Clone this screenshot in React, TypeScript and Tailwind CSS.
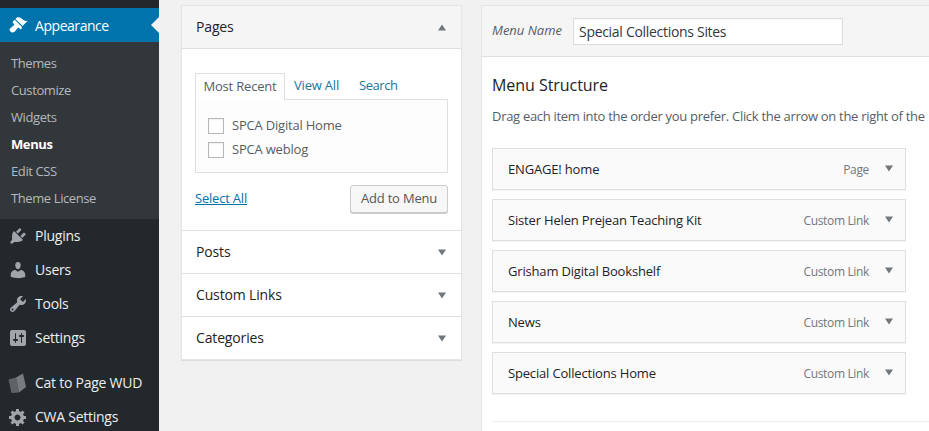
import React from "react";

const P = {
  appearance:
    "M14.48 11.06L7.41 3.99l1.5-1.5c.5-.56 2.3-.47 3.51.32 1.21.8 1.43 1.28 2.91 2.1 1.18.64 2.45 1.26 4.45.85zm-.71.71L6.7 4.7 4.93 6.47c-.39.39-.39 1.02 0 1.41l1.06 1.06c.39.39.39 1.03 0 1.42-.6.6-1.43 1.11-2.21 1.69-.35.26-.7.53-1.01.84C1.43 13.23 1 15.24 2.38 16.62c1.38 1.38 3.39.95 4.73-.39.31-.31.58-.66.84-1.01.58-.78 1.09-1.61 1.69-2.21.39-.39 1.03-.39 1.42 0l1.06 1.06c.39.39 1.02.39 1.41 0z",
  plugins:
    "M13.11 4.36L9.87 7.6 8 5.73l3.24-3.24c.35-.34 1.05-.2 1.56.32.52.51.66 1.21.31 1.55zm-8 1.77l.91-1.12 9.01 9.01-1.19.84c-.71.71-2.63 1.16-3.82 1.16H6.14L4.9 17.26c-.59.59-1.54.59-2.12 0-.59-.58-.59-1.53 0-2.12l1.24-1.24v-3.88c0-1.13.4-3.19 1.09-3.89zm7.26 3.97l3.24-3.24c.34-.35 1.04-.21 1.55.31.52.51.66 1.21.31 1.55l-3.24 3.25z",
  users:
    "M10 9.25c-2.27 0-2.73-3.44-2.73-3.44C7 4.02 7.82 2 9.97 2c2.16 0 2.98 2.02 2.71 3.81 0 0-.41 3.44-2.68 3.44zm0 2.57L12.72 10c2.39 0 4.52 2.33 4.52 4.53v2.49s-3.65 1.13-7.24 1.13c-3.65 0-7.24-1.13-7.24-1.13v-2.49c0-2.25 1.94-4.48 4.47-4.48z",
  tools:
    "M16.68 9.77c-1.34 1.34-3.3 1.67-4.95.99l-5.41 6.52c-.99.99-2.59.99-3.58 0s-.99-2.59 0-3.57l6.52-5.42c-.68-1.65-.35-3.61.99-4.95 1.28-1.28 3.12-1.62 4.72-1.06l-2.89 2.89 2.82 2.82 2.86-2.87c.53 1.58.18 3.39-1.08 4.65zM3.81 16.21c.4.39 1.04.39 1.43 0 .4-.4.4-1.04 0-1.43-.39-.4-1.03-.4-1.43 0-.39.39-.39 1.03 0 1.43z",
  settings:
    "M18 16V4c0-1.1-.9-2-2-2H4c-1.1 0-2 .9-2 2v12c0 1.1.9 2 2 2h12c1.1 0 2-.9 2-2zM8 11h1c.55 0 1 .45 1 1s-.45 1-1 1H8v1.5c0 .28-.22.5-.5.5s-.5-.22-.5-.5V13H6c-.55 0-1-.45-1-1s.45-1 1-1h1V5.500c0-.28.22-.5.5-.5s.5.22.5.5V11zm5-2h-1c-.55 0-1-.45-1-1s.45-1 1-1h1V5.500c0-.28.22-.5.5-.5s.5.22.5.5V7h1c.55 0 1 .45 1 1s-.45 1-1 1h-1v5.500c0 .28-.22.5-.5.5s-.5-.22-.5-.5V9z",
  gear:
    "M18 12h-2.180c-.17.7-.44 1.350-.81 1.930l1.540 1.540-2.100 2.100-1.540-1.540c-.58.36-1.230.63-1.910.79V19H8v-2.180c-.68-.16-1.330-.43-1.910-.79l-1.540 1.540-2.120-2.120 1.540-1.540c-.36-.58-.63-1.230-.79-1.910H1V9.030h2.170c.16-.7.44-1.350.81-1.940L2.430 5.550l2.100-2.100 1.540 1.540c.58-.37 1.240-.64 1.930-.81V2h3v2.180c.68.16 1.330.43 1.910.79l1.540-1.540 2.120 2.120-1.540 1.540c.36.59.64 1.240.8 1.940H18V12zm-8.500 1.500c1.660 0 3-1.340 3-3s-1.340-3-3-3-3 1.340-3 3 1.340 3 3 3z",
};

function Dash({ d, className }: { d: string; className: string }) {
  return (
    <svg viewBox="0 0 20 20" className={className} fill="currentColor" fillRule="evenodd">
      <path d={d} />
    </svg>
  );
}

function BookIcon() {
  return (
    <svg viewBox="0 0 20 20" className="w-[20px] h-[20px]">
      <path d="M0.500 6.500L8 4.500 11 19.500 3.500 20z" fill="#5f6367" />
      <path d="M8 4.500L15 0.500 18 14 11 19.500z" fill="#787c7f" />
    </svg>
  );
}

function Tri({ up, className = "" }: { up?: boolean; className?: string }) {
  return (
    <svg viewBox="0 0 8 7" className={`w-[8px] h-[7px] ${className}`} fill="#72777c">
      <path d={up ? "M4 0.500L8 6.500H0z" : "M0 0.500H8L4 6.500z"} />
    </svg>
  );
}

function SideItem({ d, label, mt = "" }: { d?: string; label: string; mt?: string }) {
  return (
    <div className={`h-[34px] flex items-center text-[14px] tracking-[-0.25px] text-[#eeeeee] ${mt}`}>
      <div className="w-[35px] pl-[8px] shrink-0">
        {d ? <Dash d={d} className="w-[20px] h-[20px] text-[#a0a5aa]" /> : <BookIcon />}
      </div>
      <span className="pb-[2px]">{label}</span>
    </div>
  );
}

function Sidebar() {
  const subs = ["Themes", "Customize", "Widgets", "Menus", "Edit CSS", "Theme License"];
  return (
    <aside className="w-[159px] shrink-0 bg-[#23282d] h-full overflow-hidden pt-[8px]">
      <div className="relative h-[34px] bg-[#0073aa] flex items-center text-[14px] tracking-[-0.45px] text-white">
        <div className="w-[35px] pl-[8px] shrink-0">
          <Dash d={P.appearance} className="w-[20px] h-[20px] text-white" />
        </div>
        <span>Appearance</span>
        <div className="absolute right-0 top-[9px] w-0 h-0 border-y-[8px] border-y-transparent border-r-[8px] border-r-[#f1f1f1]" />
      </div>
      <div className="bg-[#32373c] pt-[8px] h-[177px]">
        {subs.map((s) => (
          <div
            key={s}
            className={`h-[27px] flex items-center pl-[11px] text-[13px] tracking-[-0.4px] ${
              s === "Menus" ? "text-white font-bold" : "text-[#b4b9be]"
            }`}
          >
            {s}
          </div>
        ))}
      </div>
      <SideItem d={P.plugins} label="Plugins" />
      <SideItem d={P.users} label="Users" />
      <SideItem d={P.tools} label="Tools" />
      <SideItem d={P.settings} label="Settings" />
      <SideItem label="Cat to Page WUD" mt="mt-[11px]" />
      <SideItem d={P.gear} label="CWA Settings" />
    </aside>
  );
}

function Check({ label }: { label: string }) {
  return (
    <label className="flex items-center h-[24px] gap-[8px] text-[13px] tracking-[-0.2px] text-[#555d66]">
      <span className="w-[16px] h-[16px] border border-[#b4b9be] bg-white shadow-[inset_0_1px_2px_rgba(0,0,0,0.07)]" />
      {label}
    </label>
  );
}

function Collapsed({ label }: { label: string }) {
  return (
    <div className="h-[43px] border-t border-[#e0e0e0] flex items-center justify-between pl-[14px] pr-[15px]">
      <span className="text-[14px] font-medium tracking-[-0.15px] text-[#1d2327] pb-[2px]">{label}</span>
      <Tri />
    </div>
  );
}

function LeftPanel() {
  return (
    <section className="w-[281px] shrink-0 self-start mt-[5px] ml-[22px] bg-white border border-[#e5e5e5] shadow-[0_1px_1px_rgba(0,0,0,0.08)]">
      <div className="h-[43px] bg-[#f5f5f5] border-b border-[#e0e0e0] flex items-center justify-between pl-[14px] pr-[15px]">
        <span className="text-[14px] font-medium tracking-[-0.15px] text-[#1d2327] pb-[2px]">Pages</span>
        <Tri up />
      </div>
      <div className="h-[181px] px-[13px] pt-[24px]">
        <div className="flex h-[26px] text-[13px] tracking-[-0.2px]">
          <div className="w-[90px] h-[27px] border border-b-0 border-[#dfdfdf] bg-white relative z-10 flex items-center justify-center text-[#555d66]">
            Most Recent
          </div>
          <div className="pl-[9px] flex items-center text-[#21759b]">View All</div>
          <div className="pl-[20px] flex items-center tracking-[-0.45px] text-[#21759b]">Search</div>
        </div>
        <div className="h-[74px] border border-[#dfdfdf] bg-[#fdfdfd] pt-[14px] pl-[12px]">
          <Check label="SPCA Digital Home" />
          <Check label="SPCA weblog" />
        </div>
        <div className="flex items-center justify-between mt-[12px]">
          <a className="text-[13px] tracking-[-0.2px] text-[#0073aa] underline">Select All</a>
          <button className="h-[28px] w-[98px] border border-[#cccccc] rounded-[3px] bg-[#f7f7f7] text-[13px] tracking-[-0.2px] text-[#555555] shadow-[0_1px_0_#cccccc]">
            Add to Menu
          </button>
        </div>
      </div>
      <Collapsed label="Posts" />
      <Collapsed label="Custom Links" />
      <Collapsed label="Categories" />
    </section>
  );
}

function MenuItem({ label, type }: { label: string; type: string }) {
  return (
    <div className="h-[42px] w-[414px] border border-[#dfdfdf] bg-[#fafafa] flex items-center pl-[15px] pr-[12px] shadow-[0_1px_1px_rgba(0,0,0,0.04)]">
      <span className="flex-1 text-[13px] font-medium tracking-[-0.17px] text-[#1d2327] mt-[1px]">{label}</span>
      <span className="text-[12px] tracking-[-0.35px] text-[#72777c] mr-[16px] mt-[2px]">{type}</span>
      <Tri className="-mt-[1px]" />
    </div>
  );
}

function RightPanel() {
  const items = [
    ["ENGAGE! home", "Page"],
    ["Sister Helen Prejean Teaching Kit", "Custom Link"],
    ["Grisham Digital Bookshelf", "Custom Link"],
    ["News", "Custom Link"],
    ["Special Collections Home", "Custom Link"],
  ];
  return (
    <section className="flex-1 min-w-0 self-start mt-[5px] ml-[19px] h-[426px] bg-white border-l border-t border-[#e5e5e5] overflow-hidden">
      <div className="h-[51px] bg-[#f5f5f5] border-b border-[#dfdfdf] flex items-center pl-[10px]">
        <span className="text-[13px] italic text-[#555d66] w-[81px] shrink-0">Menu Name</span>
        <div className="w-[270px] h-[27px] border border-[#dddddd] bg-white flex items-center pl-[5px] text-[14px] tracking-[-0.3px] text-[#32373c] shadow-[inset_0_1px_2px_rgba(0,0,0,0.04)]">
          Special Collections Sites
        </div>
      </div>
      <div className="pl-[10px]">
        <h3 className="text-[16px] font-medium tracking-[-0.05px] text-[#1d2327] leading-[20px] mt-[18px]">Menu Structure</h3>
        <p className="text-[13px] tracking-[-0.3px] text-[#555d66] whitespace-nowrap leading-[20px] mt-[11px]">
          Drag each item into the order you prefer. Click the arrow on the right of the
        </p>
        <div className="flex flex-col gap-[9px] mt-[22px]">
          {items.map(([l, t]) => (
            <MenuItem key={l} label={l} type={t} />
          ))}
        </div>
        <div className="mt-[27px] border-t border-[#eeeeee]" />
      </div>
    </section>
  );
}

export default function App() {
  return (
    <div className="w-[929px] h-[431px] flex overflow-hidden bg-[#f1f1f1] font-['Open_Sans',sans-serif]">
      <Sidebar />
      <LeftPanel />
      <RightPanel />
    </div>
  );
}
